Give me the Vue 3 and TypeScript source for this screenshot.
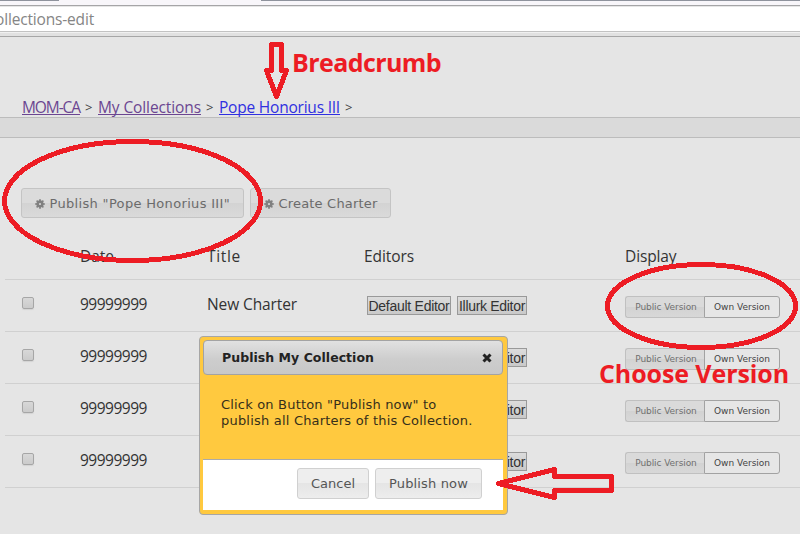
<script setup lang="ts">
interface Charter {
  id: number
  date: string
  title: string
}

const charters: Charter[] = [
  { id: 1, date: '99999999', title: 'New Charter' },
  { id: 2, date: '99999999', title: '' },
  { id: 3, date: '99999999', title: '' },
  { id: 4, date: '99999999', title: '' },
]

const teeth = [0, 45, 90, 135, 180, 225, 270, 315]

// Spreads the letters of a label over the given width in pixels.
const vFit = {
  mounted(el: HTMLElement, binding: { value: number }) {
    const count = (el.textContent ?? '').length
    if (!count) return
    const natural = el.getBoundingClientRect().width
    el.style.letterSpacing = `${(binding.value - natural) / count}px`
  },
}
</script>

<template>
  <div class="screen">
    <header class="chrome">
      <div class="tabs"><i class="tab-a"></i><i class="gap"></i><i class="tab-b"></i></div>
      <div class="address"><span v-fit="99">ollections-edit</span></div>
      <div class="edge"></div>
    </header>

    <nav class="crumbs">
      <a v-fit="58">MOM-CA</a><span class="sep">&gt;</span>
      <a v-fit="103">My Collections</a><span class="sep">&gt;</span>
      <a v-fit="121" class="current">Pope Honorius III</a><span class="sep">&gt;</span>
    </nav>
    <div class="strip"></div>

    <div class="actions">
      <button class="btn publish">
        <svg class="gear" viewBox="-5 -5 10 10"><circle r="2.4" /><rect v-for="a in teeth" :key="a" x="-0.8" y="-4.8" width="1.6" height="3" :transform="`rotate(${a})`" /></svg>
        <span v-fit="180.5">Publish "Pope Honorius III"</span>
      </button>
      <button class="btn create">
        <svg class="gear" viewBox="-5 -5 10 10"><circle r="2.4" /><rect v-for="a in teeth" :key="a" x="-0.8" y="-4.8" width="1.6" height="3" :transform="`rotate(${a})`" /></svg>
        <span v-fit="99">Create Charter</span>
      </button>
    </div>

    <section class="table">
      <div class="row head">
        <span></span>
        <span><b v-fit="34">Date</b></span>
        <span><b v-fit="34">Title</b></span>
        <span><b v-fit="50">Editors</b></span>
        <span><b v-fit="51.5">Display</b></span>
      </div>
      <div v-for="c in charters" :key="c.id" class="row">
        <span class="check"><i></i></span>
        <span class="text"><b v-fit="67">{{ c.date }}</b></span>
        <span class="text"><b v-fit="90">{{ c.title }}</b></span>
        <span class="editors">
          <button class="editor wide"><em v-fit="81">Default Editor</em></button>
          <button class="editor"><em v-fit="66">Illurk Editor</em></button>
        </span>
        <span class="toggle">
          <button class="public"><em v-fit="61.5">Public Version</em></button>
          <button class="own"><em v-fit="56">Own Version</em></button>
        </span>
      </div>
    </section>

    <div class="dialog">
      <div class="titlebar">
        <strong v-fit="152">Publish My Collection</strong>
        <svg class="close" viewBox="0 0 10 10"><path d="M1.5 1.5 8.5 8.5M8.5 1.5 1.5 8.5" /></svg>
      </div>
      <div class="message">
        <div><span v-fit="215.5">Click on Button "Publish now" to</span></div>
        <div><span v-fit="251.5">publish all Charters of this Collection.</span></div>
      </div>
      <div class="pane">
        <button class="btn cancel"><span v-fit="44">Cancel</span></button>
        <button class="btn now"><span v-fit="79">Publish now</span></button>
      </div>
    </div>

    <svg class="marks" viewBox="0 0 800 534" shape-rendering="crispEdges">
      <ellipse cx="132.5" cy="201" rx="128" ry="59.5" />
      <ellipse cx="701.5" cy="306" rx="94" ry="41.5" />
      <path d="M271.5 44.5H281.5V70.5H286.5L276.5 96.5 266.5 70.5H271.5Z" />
      <path d="M498.5 483.5 554.5 469.5V476.5H611.5V490.5H554.5V497.5Z" />
    </svg>
    <div class="note breadcrumb"><span v-fit="149">Breadcrumb</span></div>
    <div class="note choose"><span v-fit="190">Choose Version</span></div>
  </div>
</template>

<style>
body {
  margin: 0;
  overflow: hidden;
}
</style>

<style scoped>
.screen {
  position: relative;
  width: 800px;
  height: 534px;
  overflow: hidden;
  background: #e5e5e5;
  color: #333;
  font: 15.5px/20px "Open Sans", sans-serif;
}
.screen * {
  box-sizing: border-box;
}
.screen span,
.screen b,
.screen em,
.screen strong,
.screen a {
  white-space: nowrap;
}
b {
  font-weight: 400;
}
em {
  font-style: normal;
}
button {
  margin: 0;
  padding: 0;
  font: inherit;
  color: inherit;
}
.tabs {
  display: flex;
  height: 6px;
  background: #f8f6fa;
  border-bottom: 1px solid #a5a5a7;
}
.tabs i {
  height: 1px;
  background: #8f939d;
}
.tab-a {
  width: 59px;
}
.tabs .gap {
  width: 202px;
  background: #f8f6fa;
}
.tab-b {
  flex: 1;
}
.address {
  height: 26px;
  padding-top: 2px;
  border-top: 1px solid #e6e6e6;
  border-bottom: 1px solid #c2c2c2;
  background: #fff;
  color: #858585;
}
.address span {
  margin-left: -5px;
}
.edge {
  height: 5px;
  border-top: 1px solid #f0f0f0;
  border-bottom: 1px solid #a6a6a6;
  background: #e1e1e1;
}
.crumbs {
  display: flex;
  height: 80px;
  padding: 60px 0 0 22px;
}
.crumbs a {
  color: #6b4591;
  text-decoration: underline;
  text-decoration-thickness: 1px;
  text-decoration-skip-ink: none;
  text-underline-offset: 1px;
}
.crumbs .current {
  color: #3030e0;
}
.sep {
  width: 18px;
  padding-left: 5px;
  font-size: 13px;
  color: #444;
}
.strip {
  height: 21px;
  border: solid #bcbcbc;
  border-width: 1px 0;
  background: #dadada;
}
.actions {
  display: flex;
  gap: 6px;
  padding: 50px 0 0 21px;
}
.btn {
  display: flex;
  align-items: center;
  justify-content: center;
  height: 30px;
  border: 1px solid #c4c4c4;
  border-radius: 3px;
  background: linear-gradient(#dbdbdb 0 50%, #d3d3d3 50%, #dadada);
  color: #6b6b6b;
  font: 13px/16px "DejaVu Sans", sans-serif;
}
.actions .btn {
  padding-top: 1px;
}
.publish,
.create {
  justify-content: flex-start;
  gap: 4.5px;
  padding-left: 13px;
}
.publish {
  width: 223px;
}
.create {
  width: 141px;
}
.gear {
  width: 10px;
  height: 10px;
  fill: #808080;
}
.gear circle {
  fill: none;
  stroke: #808080;
  stroke-width: 2.6;
}
.table {
  margin-left: 5px;
}
.row {
  display: grid;
  grid-template-columns: 75px 127px 157px 261px 1fr;
  align-items: center;
  height: 52px;
  border-bottom: 1px solid #d0d0d0;
}
.row.head {
  height: 62px;
  padding-top: 15px;
}
.text {
  padding-bottom: 3px;
}
.check {
  padding-left: 17px;
}
.check i {
  display: block;
  width: 12px;
  height: 12px;
  margin-top: -5px;
  border: 1px solid #a6a6a6;
  border-radius: 2px;
  background: linear-gradient(#d8d8d8, #cbcbcb);
  box-shadow: 0 1px 1px #d3d3d3;
}
.editors {
  display: flex;
  gap: 6px;
  padding-left: 3px;
}
.editor {
  width: 70px;
  height: 19px;
  border: 1px solid #999;
  background: linear-gradient(#dcdcdc, #c9c9c9);
  color: #333;
  font: 14px/16px "Liberation Sans", Arial, sans-serif;
}
.editor.wide {
  width: 84px;
}
.toggle {
  display: flex;
  margin-top: 3px;
  font: 9px/12px "DejaVu Sans", sans-serif;
}
.toggle button {
  height: 22px;
}
.public {
  width: 79px;
  border: 1px solid #c0c0c0;
  border-right: 0;
  border-radius: 3px 0 0 3px;
  background: linear-gradient(#dadada 0 50%, #d2d2d2 50%, #d8d8d8);
  color: #707070;
}
.toggle .public {
  padding-left: 2px;
}
.own {
  width: 76px;
  border: 1px solid #a2a2a2;
  border-radius: 0 3px 3px 0;
  background: #e6e6e6;
  color: #444;
}
.dialog {
  position: absolute;
  left: 199px;
  top: 336px;
  width: 309px;
  height: 179px;
  padding: 3px 4px 4px 3px;
  border: 1px solid #a6a6a6;
  border-radius: 4px;
  background: #ffc93f;
  color: #362f1a;
  font: 13px/16px "DejaVu Sans", sans-serif;
}
.titlebar {
  display: flex;
  align-items: center;
  justify-content: space-between;
  height: 35px;
  padding: 0 10px 0 18px;
  border: 1px solid #a3a3a3;
  border-radius: 4px;
  background: linear-gradient(#e1e1e1 0%, #cdcdcd 55%, #c8c8c8);
  color: #222;
}
.titlebar strong {
  font-size: 12.5px;
}
.close {
  width: 10px;
  height: 10px;
  fill: none;
  stroke: #222;
  stroke-width: 3;
}
.message {
  height: 84px;
  padding: 22px 0 0 18px;
}
.pane {
  display: flex;
  gap: 6px;
  justify-content: flex-end;
  height: 51px;
  padding: 8px 21px 0 0;
  border-top: 1px solid #aaa;
  background: #fff;
}
.pane .btn {
  height: 31px;
  border-color: #d0d0d0;
  background: linear-gradient(#eee 0 50%, #e5e5e5 50%, #ededed);
  color: #555;
}
.cancel {
  width: 72px;
}
.now {
  width: 107px;
}
.marks {
  position: absolute;
  left: 0;
  top: 0;
  width: 800px;
  height: 534px;
  fill: none;
  stroke: #ed1c24;
  stroke-width: 5;
  stroke-linejoin: round;
}
.note {
  position: absolute;
  color: #ed1c24;
  font: 700 25px/32px "Open Sans", sans-serif;
}
.breadcrumb {
  left: 292px;
  top: 46px;
}
.choose {
  left: 599px;
  top: 357px;
}
</style>
